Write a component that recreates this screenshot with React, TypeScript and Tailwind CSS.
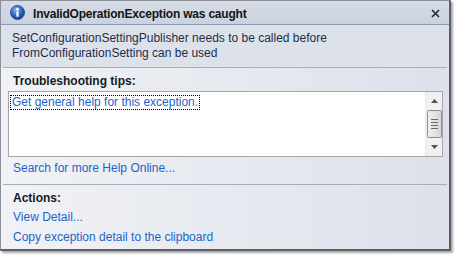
import React from 'react';

const font = { fontFamily: '"Segoe UI", "Liberation Sans", Arial, sans-serif' };

const InfoIcon: React.FC = () => (
  <svg width="15" height="15" viewBox="0 0 15 15">
    <defs>
      <radialGradient id="ig" cx="40%" cy="30%" r="75%">
        <stop offset="0%" stopColor="#8fb8f0" />
        <stop offset="55%" stopColor="#2f63c4" />
        <stop offset="100%" stopColor="#123a8c" />
      </radialGradient>
    </defs>
    <circle cx="7.5" cy="7.5" r="7" fill="url(#ig)" stroke="#1b3f86" strokeWidth="0.8" />
    <circle cx="7.5" cy="4.2" r="1.3" fill="#ffffff" />
    <rect x="6.4" y="6.2" width="2.2" height="5.6" rx="0.4" fill="#ffffff" />
  </svg>
);

const Link: React.FC<{ children: React.ReactNode }> = ({ children }) => (
  <span className="text-[#1c64c8] leading-[15px] block">{children}</span>
);

export default function App() {
  return (
    <div className="w-[456px] h-[256px] bg-white relative" style={font}>
      <div className="w-[451px] h-[251px] border border-[#8a8f98] border-r-[2px] border-r-[#5c6068] border-b-[2px] border-b-[#5c6068] shadow-[2px_2px_2px_rgba(0,0,0,0.35)] flex flex-col text-[12px] overflow-hidden">
        {/* Title bar */}
        <div className="h-[24px] shrink-0 flex items-center pl-[9px] pr-[9px] bg-gradient-to-b from-[#d5dce6] to-[#c9d2de] border-b border-[#8e9bb0]">
          <InfoIcon />
          <span className="ml-[8px] font-bold text-[#141414] text-[12px] tracking-[-0.2px] mt-[2px]">InvalidOperationException was caught</span>
          <svg className="ml-auto mt-[1px]" width="9" height="9" viewBox="0 0 9 9">
            <path d="M1 1 L8 8 M8 1 L1 8" stroke="#1e2a3a" strokeWidth="1.6" />
          </svg>
        </div>

        {/* Message */}
        <div className="h-[42px] shrink-0 bg-[#dde2ea] px-[11px] pt-[6px] text-[#1e2d48] leading-[15px]">
          <div>SetConfigurationSettingPublisher needs to be called before</div>
          <div>FromConfigurationSetting can be used</div>
        </div>

        <div className="flex-1 bg-gradient-to-r from-[#f1f2f5] to-[#dce1ea] flex flex-col">
          <div className="mx-[2px] border-t border-[#a3afc1]" />

          <div className="pl-[12px] pt-[5px] font-bold text-[#141a24] leading-[16px]">Troubleshooting tips:</div>

          <div className="mt-[2px] ml-[7px] mr-[6px] h-[66px] bg-white border border-[#a5a5a5] flex">
            <div className="flex-1 pl-[1px] pt-[1px]">
              <span className="inline-block border border-dotted border-black px-[1px] text-[#1c64c8] leading-[13px]">
                Get general help for this exception.
              </span>
            </div>
            <div className="w-[17px] bg-[#f0f0f0] border-l border-[#e8e8e8] flex flex-col items-center">
              <div className="h-[17px] flex items-center justify-center">
                <svg width="7" height="4" viewBox="0 0 7 4"><path d="M0 4 L3.5 0 L7 4 Z" fill="#555" /></svg>
              </div>
              <div className="w-[15px] h-[28px] mt-[1px] rounded-[2px] border border-[#8e8f8f] bg-gradient-to-r from-[#f0f0f0] to-[#d6d6d6] flex flex-col items-center justify-center gap-[2px]">
                <div className="w-[7px] h-[1px] bg-[#6a6a6a]" />
                <div className="w-[7px] h-[1px] bg-[#6a6a6a]" />
                <div className="w-[7px] h-[1px] bg-[#6a6a6a]" />
                <div className="w-[7px] h-[1px] bg-[#6a6a6a]" />
              </div>
              <div className="flex-1 flex items-center justify-center">
                <svg width="7" height="4" viewBox="0 0 7 4"><path d="M0 0 L7 0 L3.5 4 Z" fill="#555" /></svg>
              </div>
            </div>
          </div>

          <div className="pl-[12px] mt-[4px]">
            <Link>Search for more Help Online...</Link>
          </div>

          <div className="mx-[2px] mt-[8px] border-t border-[#a3afc1]" />

          <div className="pl-[12px] pt-[6px] font-bold text-[#141a24] leading-[15px]">Actions:</div>
          <div className="pl-[12px] mt-[4px]">
            <Link>View Detail...</Link>
          </div>
          <div className="pl-[12px] mt-[5px]">
            <Link>Copy exception detail to the clipboard</Link>
          </div>
        </div>
      </div>
    </div>
  );
}
